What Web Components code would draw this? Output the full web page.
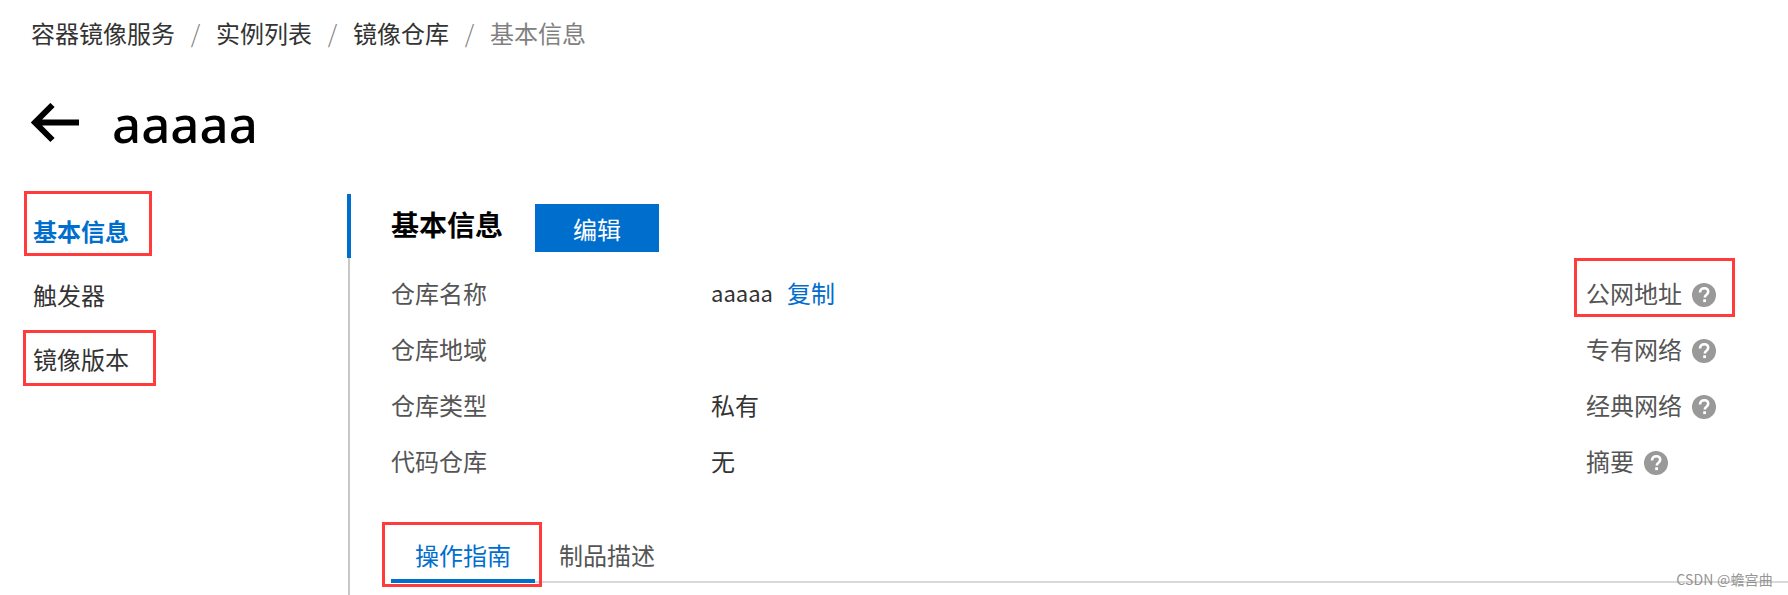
<!DOCTYPE html>
<html lang="zh">
<head>
<meta charset="utf-8">
<title>基本信息</title>
<style>
    html, body { margin: 0; background: #fff; }
    body {
        font-family: "Noto Sans CJK SC", "Noto Sans", sans-serif;
        font-size: 24px;
        color: #333;
    }
    #page { position: relative; width: 1788px; height: 595px; overflow: hidden; }
</style>
</head>
<body>
<div id="page">
    <crumb-bar>
        <a>容器镜像服务</a><a>实例列表</a><a>镜像仓库</a><a>基本信息</a>
    </crumb-bar>
    <page-title>aaaaa</page-title>
    <repo-layout>
        <side-nav slot="nav">
            <nav-item active>基本信息</nav-item>
            <nav-item>触发器</nav-item>
            <nav-item>镜像版本</nav-item>
        </side-nav>
        <section-head>基本信息</section-head>
        <info-row label="仓库名称" side="公网地址"><span style="font-size:22px;width:76px">aaaaa</span><link-text>复制</link-text></info-row>
        <info-row label="仓库地域" side="专有网络"></info-row>
        <info-row label="仓库类型" side="经典网络"><span>私有</span></info-row>
        <info-row label="代码仓库" side="摘要"><span>无</span></info-row>
        <tab-bar>
            <tab-item active>操作指南</tab-item>
            <tab-item>制品描述</tab-item>
        </tab-bar>
    </repo-layout>

    <!-- annotations drawn over the screenshot -->
    <red-mark style="left:24px;top:191px;width:128px;height:65px"></red-mark>
    <red-mark style="left:23px;top:330px;width:133px;height:56px"></red-mark>
    <red-mark style="left:382px;top:522px;width:160px;height:65px"></red-mark>
    <red-mark style="left:1574px;top:258px;width:161px;height:59px"></red-mark>
    <water-mark>CSDN @蟾宫曲</water-mark>
</div>

<script>
const BLUE = '#006ecd';

class CrumbBar extends HTMLElement {
    constructor() {
        super();
        this.attachShadow({ mode: 'open' });
        this.shadowRoot.innerHTML = `
            <style>
                :host { display: flex; padding: 13px 0 0 31px; height: 40px; line-height: 40px; color: #333; }
                ::slotted(a) { color: #333; }
                ::slotted(a:last-child) { color: #808080; }
                ::slotted(a:not(:last-child))::after {
                    content: "/";
                    display: inline-block;
                    width: 41px;
                    text-align: center;
                    color: #808080;
                    font-weight: 300;
                }
            </style>
            <slot></slot>
        `;
    }
}

class PageTitle extends HTMLElement {
    constructor() {
        super();
        this.attachShadow({ mode: 'open' });
        this.shadowRoot.innerHTML = `
            <style>
                :host {
                    display: flex;
                    align-items: center;
                    gap: 33px;
                    padding: 40px 0 0 31px;
                    height: 60px;
                    color: #000;
                    font-family: "Noto Sans", sans-serif;
                    font-size: 51px;
                    font-weight: 500;
                    line-height: 60px;
                }
                svg { display: block; flex: none; }
            </style>
            <svg width="48" height="40" viewBox="0 0 48 40">
                <path d="M48 19.500H4M21.500 2 4 19.500 21.500 37" fill="none" stroke="#000" stroke-width="6"/>
            </svg>
            <slot></slot>
        `;
    }
}

class RepoLayout extends HTMLElement {
    constructor() {
        super();
        this.attachShadow({ mode: 'open' });
        this.shadowRoot.innerHTML = `
            <style>
                :host { display: grid; grid-template-columns: 348px 1fr; margin-top: 41px; }
                .main {
                    border-left: 2px solid #c8c8c8;
                    padding-left: 41px;
                    height: 401px;
                    position: relative;
                }
                .bar {
                    position: absolute;
                    left: -3px; top: 0;
                    width: 4px; height: 64px;
                    background: ${BLUE};
                }
            </style>
            <slot name="nav"></slot>
            <div class="main"><div class="bar"></div><slot></slot></div>
        `;
    }
}

class SideNav extends HTMLElement {
    constructor() {
        super();
        this.attachShadow({ mode: 'open' });
        this.shadowRoot.innerHTML = `
            <style>
                :host { display: flex; flex-direction: column; padding: 5px 0 0 33px; }
            </style>
            <slot></slot>
        `;
    }
}

class NavItem extends HTMLElement {
    constructor() {
        super();
        this.attachShadow({ mode: 'open' });
        this.shadowRoot.innerHTML = `
            <style>
                :host { display: block; height: 64px; line-height: 64px; color: #333; }
                :host([active]) { color: ${BLUE}; font-weight: 700; }
            </style>
            <slot></slot>
        `;
    }
}

class SectionHead extends HTMLElement {
    constructor() {
        super();
        this.attachShadow({ mode: 'open' });
        this.shadowRoot.innerHTML = `
            <style>
                :host { display: flex; align-items: flex-start; height: 70px; }
                .name { width: 144px; height: 60px; line-height: 60px; font-size: 28px; font-weight: 700; color: #000; }
                .btn {
                    width: 124px; height: 48px;
                    margin-top: 10px;
                    display: flex; align-items: center; justify-content: center;
                    background: ${BLUE}; color: #fff;
                }
            </style>
            <div class="name"><slot></slot></div>
            <div class="btn">编辑</div>
        `;
    }
}

class HelpIcon extends HTMLElement {
    constructor() {
        super();
        this.attachShadow({ mode: 'open' });
        this.shadowRoot.innerHTML = `
            <style>
                :host { display: block; width: 24px; height: 24px; flex: none; margin-top: 6px; }
                svg { display: block; }
            </style>
            <svg width="24" height="24" viewBox="0 0 24 24">
                <circle cx="12" cy="12" r="12" fill="#999"/>
                <path d="M8 9.400C8 6.900 9.800 5.300 12.200 5.300c2.400 0 4 1.500 4 3.500 0 1.500-.8 2.400-2 3.200-1 .7-1.400 1.200-1.400 2.400" fill="none" stroke="#fff" stroke-width="2.600"/>
                <rect x="11.200" y="16.300" width="2.800" height="2.800" fill="#fff"/>
            </svg>
        `;
    }
}

class InfoRow extends HTMLElement {
    constructor() {
        super();
        this.attachShadow({ mode: 'open' });
        this.shadowRoot.innerHTML = `
            <style>
                :host { display: flex; align-items: center; height: 56px; color: #333; }
                .label { width: 320px; flex: none; color: #555; }
                .value { flex: 1; display: flex; align-items: center; }
                .side { width: 202px; flex: none; display: flex; align-items: center; gap: 10px; color: #555; }
            </style>
            <div class="label"></div>
            <div class="value"><slot></slot></div>
            <div class="side"><span class="side-text"></span><help-icon></help-icon></div>
        `;
    }

    connectedCallback() {
        this.shadowRoot.querySelector('.label').textContent = this.getAttribute('label');
        this.shadowRoot.querySelector('.side-text').textContent = this.getAttribute('side');
    }
}

class LinkText extends HTMLElement {
    constructor() {
        super();
        this.attachShadow({ mode: 'open' });
        this.shadowRoot.innerHTML = `
            <style>
                :host { display: inline-block; color: ${BLUE}; }
            </style>
            <slot></slot>
        `;
    }
}

class TabBar extends HTMLElement {
    constructor() {
        super();
        this.attachShadow({ mode: 'open' });
        this.shadowRoot.innerHTML = `
            <style>
                :host {
                    display: flex;
                    margin-top: 33px;
                    height: 60px;
                    width: 1397px;
                    border-bottom: 2px solid #d9d9d9;
                }
            </style>
            <slot></slot>
        `;
    }
}

class TabItem extends HTMLElement {
    constructor() {
        super();
        this.attachShadow({ mode: 'open' });
        this.shadowRoot.innerHTML = `
            <style>
                :host {
                    display: block;
                    padding: 0 24px;
                    height: 60px;
                    line-height: 68px;
                    color: #555;
                }
                :host([active]) {
                    color: ${BLUE};
                    height: 58px;
                    border-bottom: 4px solid ${BLUE};
                }
            </style>
            <slot></slot>
        `;
    }
}

class RedMark extends HTMLElement {
    constructor() {
        super();
        this.attachShadow({ mode: 'open' });
        this.shadowRoot.innerHTML = `
            <style>
                :host { position: absolute; box-sizing: border-box; border: 3px solid #ff3b3b; }
            </style>
        `;
    }
}

class WaterMark extends HTMLElement {
    constructor() {
        super();
        this.attachShadow({ mode: 'open' });
        this.shadowRoot.innerHTML = `
            <style>
                :host {
                    position: absolute;
                    right: 15px; top: 569px;
                    font-size: 14px;
                    letter-spacing: .2px;
                    line-height: 20px;
                    color: rgba(120, 120, 120, .8);
                }
            </style>
            <slot></slot>
        `;
    }
}

customElements.define('crumb-bar', CrumbBar);
customElements.define('page-title', PageTitle);
customElements.define('repo-layout', RepoLayout);
customElements.define('side-nav', SideNav);
customElements.define('nav-item', NavItem);
customElements.define('section-head', SectionHead);
customElements.define('help-icon', HelpIcon);
customElements.define('info-row', InfoRow);
customElements.define('link-text', LinkText);
customElements.define('tab-bar', TabBar);
customElements.define('tab-item', TabItem);
customElements.define('red-mark', RedMark);
customElements.define('water-mark', WaterMark);
</script>
</body>
</html>
